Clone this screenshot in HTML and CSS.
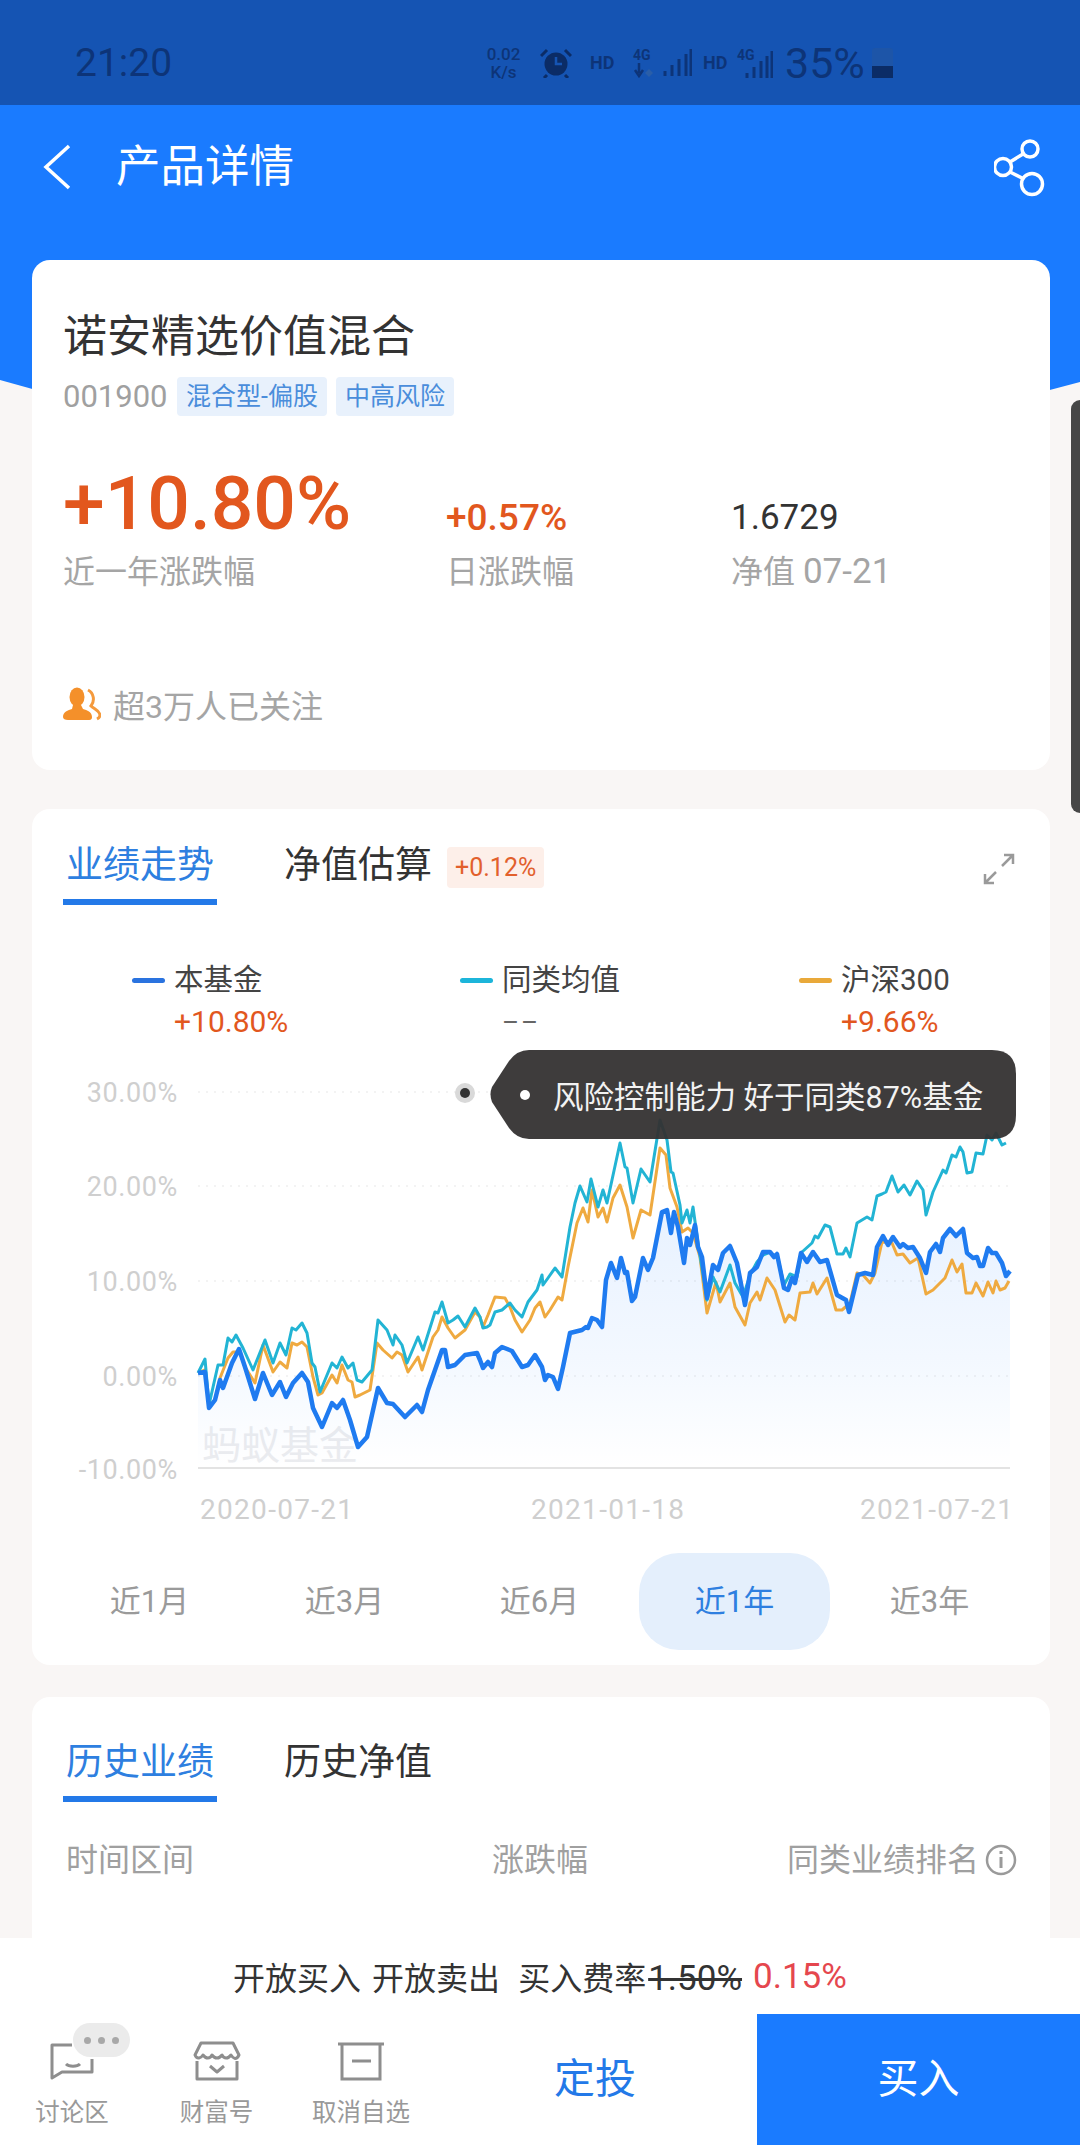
FILE: index.html
```html
<!DOCTYPE html>
<html lang="zh-CN">
  <head>
    <meta charset="UTF-8" />
    <meta name="viewport" content="width=device-width, initial-scale=1.0" />
    <title>产品详情</title>
    <link rel="stylesheet" href="styles.css">
  </head>
  <body>
    <div class="status-bar">
      <span class="status-time">21:20</span>
      <div class="status-speed"><span>0.02</span><span>K/s</span></div>
      <svg class="status-alarm" width="32" height="30" viewBox="0 0 32 30">
        <circle cx="16" cy="16" r="11.5" fill="#0b2c66" />
        <path d="M16 9v7h6" fill="none" stroke="#1554b3" stroke-width="2.5" />
        <path d="M1 8l6-6M31 8l-6-6M7 27l-3 3M25 27l3 3" stroke="#0b2c66" stroke-width="3" />
      </svg>
      <span class="status-hd status-hd-first">HD</span>
      <div class="status-net"><span>4G</span><svg width="22" height="15" viewBox="0 0 22 15"><path d="M6 0v10M2 7l4 6 4-6" fill="none" stroke="#0d3478" stroke-width="2.5" /><path d="M16 6l4 4-4 4-4-4z" fill="#2a5ea8" /></svg></div>
      <svg class="status-signal" width="29" height="27" viewBox="0 0 29 27">
        <path d="M2 22v5M9 16v11M16 10v17M23 5v22M28 0v27" stroke="#0d3478" stroke-width="3" />
      </svg>
      <span class="status-hd status-hd-second">HD</span>
      <div class="status-sim2">
        <span>4G</span>
        <svg width="28" height="27" viewBox="0 0 28 27"><path d="M2 22v5M9 16v11M16 10v17M22 5v22M27 0v27" stroke="#0d3478" stroke-width="3" /></svg>
      </div>
      <span class="status-battery-text">35%</span>
      <div class="status-battery"><div class="status-battery-fill"></div></div>
    </div>

    <header class="app-header">
      <div class="header-row">
        <svg class="back-icon" width="28" height="46" viewBox="0 0 28 46">
          <path d="M26 2L3 23l23 21" fill="none" stroke="#fff" stroke-width="3.5" />
        </svg>
        <h1 class="header-title">产品详情</h1>
        <svg class="share-icon" width="54" height="60" viewBox="0 0 54 60">
          <g fill="none" stroke="#fff" stroke-width="3.5">
            <circle cx="36" cy="12" r="8" />
            <circle cx="9" cy="30" r="8.5" />
            <circle cx="38" cy="47" r="10.5" />
            <path d="M29 17l-13 8M16 35l14 7" />
          </g>
        </svg>
      </div>
    </header>

    <main class="content">
      <section class="card card-summary">
        <h2 class="fund-name">诺安精选价值混合</h2>
        <div class="fund-meta">
          <span class="fund-code">001900</span>
          <span class="fund-tag">混合型-偏股</span>
          <span class="fund-tag">中高风险</span>
        </div>
        <div class="stats">
          <div class="stat">
            <div class="stat-value stat-big up">+10.80%</div>
            <div class="stat-label">近一年涨跌幅</div>
          </div>
          <div class="stat">
            <div class="stat-value stat-mid up">+0.57%</div>
            <div class="stat-label">日涨跌幅</div>
          </div>
          <div class="stat">
            <div class="stat-value">1.6729</div>
            <div class="stat-label">净值 <span class="stat-date">07-21</span></div>
          </div>
        </div>
        <div class="follow">
          <svg width="38" height="34" viewBox="0 0 38 34">
            <path d="M25 3c6 3 7 11 3 16 3 3 8 4 9 9 0 2-1 3-3 4" fill="none" stroke="#f59a3c" stroke-width="3" />
            <ellipse cx="14" cy="10" rx="7.5" ry="9.5" fill="#f4902a" />
            <path d="M10 18h8l2 4c4 1 9 3 9 8 0 3-2 3-4 3H5c-3 0-5-1-5-3 0-5 5-7 9-8z" fill="#f4902a" />
          </svg>
          <span>超3万人已关注</span>
        </div>
      </section>

      <section class="card card-chart">
        <div class="tabs-row">
          <div class="tabs">
            <div class="tab tab-active">业绩走势</div>
            <div class="tab">净值估算</div>
          </div>
          <span class="tab-badge">+0.12%</span>
          <svg class="expand-icon" width="32" height="32" viewBox="0 0 32 32">
            <path d="M19 13L30 2M21 2h9v9M13 19L2 30M2 21v9h9" fill="none" stroke="#9a9a9a" stroke-width="2.5" />
          </svg>
        </div>

        <div class="legend">
          <div class="legend-item legend-fund">
            <div class="legend-name"><i class="legend-bar bar-blue"></i>本基金</div>
            <div class="legend-value up">+10.80%</div>
          </div>
          <div class="legend-item legend-peer">
            <div class="legend-name"><i class="legend-bar bar-teal"></i>同类均值</div>
            <div class="legend-value muted">––</div>
          </div>
          <div class="legend-item legend-index">
            <div class="legend-name"><i class="legend-bar bar-orange"></i>沪深300</div>
            <div class="legend-value up">+9.66%</div>
          </div>
        </div>

        <div class="chart">
          <svg class="chart-svg" width="1018" height="490" viewBox="32 1040 1018 490">
            <defs>
              <linearGradient id="areaFill" x1="0" y1="0" x2="0" y2="1">
                <stop offset="0" stop-color="#1a7bff" stop-opacity="0.1" />
                <stop offset="0.6" stop-color="#1a7bff" stop-opacity="0.05" />
                <stop offset="1" stop-color="#1a7bff" stop-opacity="0" />
              </linearGradient>
            </defs>

            <g class="grid-lines">
              <path d="M198 1092H1010M198 1186H1010M198 1281H1010M198 1376H1010" />
            </g>
            <path class="base-line" d="M198 1468H1010" />

            <g class="axis-text">
              <text x="178" y="1102" text-anchor="end">30.00%</text>
              <text x="178" y="1196" text-anchor="end">20.00%</text>
              <text x="178" y="1291" text-anchor="end">10.00%</text>
              <text x="178" y="1386" text-anchor="end">0.00%</text>
              <text x="178" y="1479" text-anchor="end">-10.00%</text>
            </g>
            <g class="axis-text axis-dates">
              <text x="200" y="1519">2020-07-21</text>
              <text x="531" y="1519">2021-01-18</text>
              <text x="860" y="1519">2021-07-21</text>
            </g>
            <text class="watermark" x="202" y="1459">蚂蚁基金</text>

            <polygon fill="url(#areaFill)" points="198,1468 198,1373 205,1372 209,1408 215,1400 220,1380 223,1388 232,1363 239,1349 245,1367 255,1399 263,1373 272,1395 280,1382 286,1397 293,1383 302,1373 308,1382 313,1408 322,1427 332,1403 337,1408 343,1400 350,1420 358,1447 367,1437 378,1388 387,1403 393,1404 405,1417 417,1405 422,1412 428,1390 435,1370 442,1350 445,1350 448,1367 455,1365 465,1355 477,1353 480,1360 483,1368 488,1362 492,1367 495,1353 502,1347 512,1351 522,1367 528,1365 535,1355 542,1367 545,1380 548,1375 553,1377 558,1389 563,1367 570,1333 582,1330 586,1327 588,1328 592,1318 597,1320 602,1327 606,1280 611,1263 617,1278 621,1258 625,1273 627,1272 632,1301 635,1297 643,1258 648,1270 653,1258 662,1212 667,1210 671,1233 674,1212 678,1227 684,1263 687,1238 690,1245 695,1225 698,1247 702,1257 707,1298 713,1265 718,1270 723,1253 730,1246 737,1263 745,1305 750,1273 757,1267 763,1252 770,1252 774,1257 777,1254 784,1288 788,1290 792,1278 795,1283 801,1253 807,1262 813,1252 820,1262 827,1260 837,1295 846,1300 849,1312 858,1275 865,1273 873,1275 877,1247 883,1236 888,1245 893,1237 900,1247 903,1244 908,1248 913,1247 920,1258 926,1273 930,1252 936,1244 940,1252 943,1238 950,1229 956,1236 963,1229 967,1253 973,1258 977,1257 980,1266 983,1266 988,1248 992,1253 996,1253 1002,1263 1006,1276 1010,1271 1010,1468" />

            <polyline class="line line-orange" points="198,1373 205,1370 209,1407 215,1400 220,1378 228,1358 233,1352 240,1352 245,1367 255,1383 263,1345 273,1372 280,1362 287,1368 292,1343 297,1345 302,1342 307,1347 313,1377 318,1395 322,1393 332,1375 337,1383 342,1365 348,1380 352,1382 355,1397 360,1395 370,1390 377,1343 383,1350 392,1358 397,1352 402,1355 408,1372 418,1357 422,1370 433,1337 438,1330 442,1317 448,1328 455,1338 465,1330 475,1312 480,1317 483,1327 488,1315 495,1297 505,1298 510,1307 515,1320 522,1332 530,1320 535,1308 540,1302 545,1317 550,1310 558,1297 562,1300 568,1267 577,1223 583,1208 588,1222 592,1190 598,1217 603,1208 607,1222 613,1198 620,1185 627,1207 633,1238 641,1210 650,1215 660,1148 666,1155 670,1188 677,1207 682,1232 688,1228 693,1233 700,1257 707,1313 716,1282 720,1302 730,1283 735,1307 745,1325 750,1303 757,1292 760,1300 767,1278 775,1290 785,1322 789,1315 795,1320 800,1293 810,1292 813,1283 817,1294 827,1278 836,1310 842,1310 850,1303 857,1273 863,1275 870,1283 875,1273 882,1242 892,1243 897,1255 903,1254 910,1263 918,1258 926,1294 933,1290 940,1283 945,1278 952,1260 957,1272 962,1264 966,1293 972,1293 976,1283 983,1296 988,1282 993,1293 996,1281 1000,1290 1005,1288 1009,1281" />

            <polyline class="line line-teal" points="198,1373 205,1359 209,1405 218,1365 223,1365 228,1338 232,1342 236,1335 243,1348 253,1370 265,1340 273,1363 280,1343 286,1355 292,1328 296,1330 302,1323 307,1333 312,1363 315,1367 320,1392 332,1363 337,1368 342,1357 348,1368 353,1363 357,1380 362,1382 372,1370 378,1320 387,1330 393,1345 395,1335 402,1345 407,1363 418,1337 423,1350 435,1312 438,1313 442,1302 448,1323 453,1320 458,1316 465,1327 475,1308 480,1317 483,1328 487,1327 490,1325 495,1312 502,1310 510,1303 515,1310 522,1317 528,1302 537,1290 542,1275 543,1285 548,1278 555,1268 562,1277 570,1227 575,1203 580,1186 587,1202 591,1179 598,1207 603,1190 607,1203 620,1143 625,1167 627,1168 633,1203 641,1169 650,1182 660,1120 667,1140 671,1172 673,1173 680,1205 682,1223 687,1210 690,1223 693,1207 698,1243 707,1300 713,1277 720,1292 730,1265 735,1283 743,1297 750,1275 757,1262 763,1255 770,1252 775,1257 777,1254 784,1285 790,1274 797,1277 802,1252 812,1243 815,1236 818,1238 825,1225 830,1227 837,1254 843,1254 846,1248 850,1257 857,1223 867,1217 872,1220 877,1196 882,1194 886,1192 892,1176 898,1192 904,1185 910,1195 917,1181 923,1190 926,1215 933,1192 943,1170 946,1173 952,1155 956,1157 960,1147 963,1152 967,1173 972,1172 976,1153 983,1154 987,1135 992,1140 996,1133 1002,1145 1006,1143" />

            <polyline class="line line-blue" points="198,1373 205,1372 209,1408 215,1400 220,1380 223,1388 232,1363 239,1349 245,1367 255,1399 263,1373 272,1395 280,1382 286,1397 293,1383 302,1373 308,1382 313,1408 322,1427 332,1403 337,1408 343,1400 350,1420 358,1447 367,1437 378,1388 387,1403 393,1404 405,1417 417,1405 422,1412 428,1390 435,1370 442,1350 445,1350 448,1367 455,1365 465,1355 477,1353 480,1360 483,1368 488,1362 492,1367 495,1353 502,1347 512,1351 522,1367 528,1365 535,1355 542,1367 545,1380 548,1375 553,1377 558,1389 563,1367 570,1333 582,1330 586,1327 588,1328 592,1318 597,1320 602,1327 606,1280 611,1263 617,1278 621,1258 625,1273 627,1272 632,1301 635,1297 643,1258 648,1270 653,1258 662,1212 667,1210 671,1233 674,1212 678,1227 684,1263 687,1238 690,1245 695,1225 698,1247 702,1257 707,1298 713,1265 718,1270 723,1253 730,1246 737,1263 745,1305 750,1273 757,1267 763,1252 770,1252 774,1257 777,1254 784,1288 788,1290 792,1278 795,1283 801,1253 807,1262 813,1252 820,1262 827,1260 837,1295 846,1300 849,1312 858,1275 865,1273 873,1275 877,1247 883,1236 888,1245 893,1237 900,1247 903,1244 908,1248 913,1247 920,1258 926,1273 930,1252 936,1244 940,1252 943,1238 950,1229 956,1236 963,1229 967,1253 973,1258 977,1257 980,1266 983,1266 988,1248 992,1253 996,1253 1002,1263 1006,1276 1010,1271" />

            <circle cx="465" cy="1093" r="10" fill="#d9d9d9" />
            <circle cx="465" cy="1093" r="5" fill="#333" />
          </svg>

          <div class="chart-tip">
            <i class="chart-tip-dot"></i>
            <span>风险控制能力 好于同类87%基金</span>
          </div>
        </div>

        <div class="ranges">
          <div class="range">近1月</div>
          <div class="range">近3月</div>
          <div class="range">近6月</div>
          <div class="range range-active">近1年</div>
          <div class="range">近3年</div>
        </div>
      </section>

      <section class="card card-history">
        <div class="tabs">
          <div class="tab tab-active">历史业绩</div>
          <div class="tab">历史净值</div>
        </div>
        <div class="history-head">
          <span class="history-col-time">时间区间</span>
          <span class="history-col-change">涨跌幅</span>
          <span class="history-col-rank">同类业绩排名
            <svg width="32" height="32" viewBox="0 0 32 32">
              <circle cx="16" cy="16" r="14" fill="none" stroke="#9a9a9a" stroke-width="2.5" />
              <path d="M16 13v11M16 7v3" stroke="#9a9a9a" stroke-width="3" />
            </svg>
          </span>
        </div>
      </section>
    </main>

    <div class="scroll-thumb"></div>

    <footer class="footer">
      <div class="notice">
        <span>开放买入</span>
        <span>开放卖出</span>
        <span class="notice-fee">买入费率<s>1.50%</s></span>
        <span class="notice-rate">0.15%</span>
      </div>
      <div class="actions">
        <div class="nav-item">
          <svg width="48" height="40" viewBox="0 0 48 40">
            <path d="M24 4H4v33l10-6h30V18" fill="none" stroke="#8e8e8e" stroke-width="3" stroke-linejoin="round" />
            <path d="M18 23c3 3 11 3 14 0" fill="none" stroke="#8e8e8e" stroke-width="3" />
          </svg>
          <span>讨论区</span>
          <div class="nav-bubble"><i></i><i></i><i></i></div>
        </div>
        <div class="nav-item">
          <svg width="48" height="40" viewBox="0 0 48 40">
            <g fill="none" stroke="#8e8e8e" stroke-width="3" stroke-linejoin="round">
              <path d="M8 2h32l6 12c-3 6-6 3-8 0-3 4-7 4-9 0-3 4-7 4-10 0-2 4-6 4-9 0-2 3-6 5-8 0z" />
              <path d="M4 20v18h40V20M17 25l7 6 7-6" />
            </g>
          </svg>
          <span>财富号</span>
        </div>
        <div class="nav-item">
          <svg width="48" height="40" viewBox="0 0 48 40">
            <path d="M1 3h46M5 3v35h38V3M15 20h19" fill="none" stroke="#8e8e8e" stroke-width="3" />
          </svg>
          <span>取消自选</span>
        </div>
        <div class="btn-plan">定投</div>
        <div class="btn-buy">买入</div>
      </div>
    </footer>
  </body>
</html>
```

FILE: styles.css
```css
* {
  box-sizing: border-box;
}

html,
body {
  margin: 0;
  padding: 0;
}

body {
  position: relative;
  width: 1080px;
  height: 2145px;
  overflow: hidden;
  background: #f9f6f5;
  color: #333;
  font-family: Roboto, "Noto Sans CJK SC", sans-serif;
}

h1,
h2 {
  margin: 0;
  font-weight: 400;
}

.up {
  color: #e2571e;
}

/* status bar */
.status-bar {
  display: flex;
  align-items: center;
  height: 105px;
  padding: 20px 0 0 75px;
  background: #1554b3;
  color: #0d3478;
}

.status-time {
  width: 98px;
  font-size: 39px;
  line-height: 44px;
  white-space: nowrap;
}

.status-speed {
  display: flex;
  flex-direction: column;
  align-items: center;
  width: 39px;
  margin-left: 311px;
  font-size: 17px;
  font-weight: 500;
  line-height: 18px;
}

.status-alarm {
  margin-left: 17px;
}

.status-hd {
  width: 26px;
  font-size: 18px;
  font-weight: 700;
  line-height: 20px;
}

.status-hd-first {
  margin-left: 18px;
}

.status-hd-second {
  margin-left: 11px;
}

.status-net {
  display: flex;
  flex-direction: column;
  width: 22px;
  margin-left: 17px;
  font-size: 14px;
  font-weight: 700;
  line-height: 15px;
}

.status-signal {
  margin-left: 8px;
}

.status-sim2 {
  position: relative;
  width: 36px;
  height: 30px;
  margin-left: 8px;
  font-size: 14px;
  font-weight: 700;
  line-height: 14px;
}

.status-sim2 span {
  position: absolute;
  left: 0;
  top: 0;
}

.status-sim2 svg {
  position: absolute;
  right: 0;
  bottom: 0;
}

.status-battery-text {
  width: 80px;
  margin-left: 12px;
  font-size: 43px;
  line-height: 44px;
  white-space: nowrap;
}

.status-battery {
  display: flex;
  align-items: flex-end;
  width: 21px;
  height: 30px;
  margin-left: 7px;
  border-radius: 3px 3px 2px 2px;
  background: #1d55a8;
}

.status-battery-fill {
  width: 100%;
  height: 12px;
  background: #0b2c66;
}

/* header */
.app-header {
  height: 308px;
  background: #1a7bff;
  clip-path: polygon(0 0, 100% 0, 100% 277px, 97.2% 285px, 50% 308px, 3% 284px, 0 275px);
}

.header-row {
  display: flex;
  align-items: center;
  height: 124px;
  padding: 0 32px 0 43px;
  color: #fff;
}

.header-title {
  margin-left: 45px;
  font-size: 44.5px;
  line-height: 60px;
}

.share-icon {
  margin-left: auto;
}

/* cards */
.content {
  position: relative;
  margin-top: -153px;
  padding: 0 30px 0 32px;
}

.card {
  background: #fff;
  border-radius: 18px;
}

.card-summary {
  padding: 47px 31px 46px;
}

.fund-name {
  font-size: 44px;
  line-height: 60px;
}

.fund-meta {
  display: flex;
  align-items: center;
  height: 39px;
  margin-top: 10px;
}

.fund-code {
  width: 114px;
  color: #a0a0a0;
  font-size: 31px;
}

.fund-tag {
  height: 39px;
  margin-right: 9px;
  padding: 0 9px;
  border-radius: 4px;
  background: #e8f1fc;
  color: #4a8ddb;
  font-size: 25px;
  line-height: 39px;
  white-space: nowrap;
}

.stats {
  display: grid;
  grid-template-columns: 383px 285px auto;
  align-items: end;
  margin-top: 47px;
}

.stat-value {
  font-size: 35px;
  line-height: 50px;
}

.stat-mid {
  font-size: 37px;
  font-weight: 500;
}

.stat-big {
  font-size: 75px;
  font-weight: 500;
  line-height: 80px;
}

.stat-label {
  margin-top: 9px;
  color: #a5a5a5;
  font-size: 32px;
  line-height: 40px;
}

.stat-date {
  font-size: 35px;
}

.follow {
  display: flex;
  align-items: center;
  gap: 12px;
  height: 40px;
  margin-top: 92px;
  color: #a5a5a5;
  font-size: 32px;
}

.card-chart {
  height: 856px;
  margin-top: 39px;
  padding-top: 32px;
}

.tabs-row {
  display: flex;
  align-items: flex-start;
  padding: 0 35px 0 31px;
}

.tabs {
  display: flex;
  gap: 64px;
}

.tab {
  height: 64px;
  padding: 0 3px 8px;
  font-size: 37px;
  line-height: 50px;
}

.tab-active {
  border-bottom: 6px solid #2379e8;
  color: #2e7fe0;
}

.tab-badge {
  height: 41px;
  margin: 6px 0 0 12px;
  padding: 0 8px;
  border-radius: 4px;
  background: #fdefe9;
  color: #e2602c;
  font-size: 25px;
  line-height: 41px;
}

.expand-icon {
  margin: 12px 0 0 auto;
}

.legend {
  position: relative;
  height: 95px;
  margin-top: 53px;
}

.legend-item {
  position: absolute;
  top: 0;
}

.legend-fund {
  left: 100px;
}

.legend-peer {
  left: 428px;
}

.legend-index {
  left: 767px;
}

.legend-name {
  display: flex;
  align-items: center;
  color: #444;
  font-size: 29.5px;
  line-height: 44px;
}

.legend-bar {
  width: 33px;
  height: 5px;
  margin-right: 9px;
  border-radius: 3px;
}

.bar-blue {
  background: #2a73df;
}

.bar-teal {
  background: #1cb5da;
}

.bar-orange {
  background: #e9a93a;
}

.legend-value {
  padding-left: 42px;
  font-size: 30px;
  line-height: 40px;
}

.muted {
  color: #666;
  font-size: 26px;
  letter-spacing: 2px;
}

.chart {
  position: relative;
  height: 490px;
  margin-top: -13px;
}

.chart-svg {
  display: block;
}

.grid-lines path {
  fill: none;
  stroke: #efefef;
  stroke-width: 1.5;
  stroke-dasharray: 2 6;
}

.base-line {
  fill: none;
  stroke: #e3e3e3;
  stroke-width: 2;
}

.axis-text text {
  fill: #cfcfcf;
  font-size: 27px;
  letter-spacing: 0.6px;
}

.axis-dates text {
  font-size: 28px;
  letter-spacing: 1.3px;
}

.watermark {
  fill: #ebecef;
  font-size: 39px;
}

.line {
  fill: none;
  stroke-linejoin: round;
}

.line-blue {
  stroke: #1f7bf0;
  stroke-width: 4.5;
}

.line-teal {
  stroke: #22b4d4;
  stroke-width: 3;
}

.line-orange {
  stroke: #efaa40;
  stroke-width: 3;
}

/* the pointed pill sits over the chart lines, which show faintly through it */
.chart-tip {
  position: absolute;
  left: 457px;
  top: 10px;
  display: flex;
  align-items: center;
  width: 527px;
  height: 89px;
  padding-left: 31px;
  background: rgba(52, 49, 49, 0.95);
  color: #f2f2f2;
  font-size: 30.5px;
  white-space: nowrap;
  clip-path: path("M40 0H503Q527 0 527 24V65Q527 89 503 89H40Q28 89 20 78L3 52Q0 44 3 37L20 11Q28 0 40 0Z");
}

.chart-tip-dot {
  width: 10px;
  height: 10px;
  margin-right: 23px;
  border-radius: 50%;
  background: #fff;
}

.ranges {
  display: grid;
  grid-template-columns: repeat(5, 195px);
  align-items: center;
  margin: 23px 0 0 20px;
}

.range {
  height: 97px;
  color: #9a9a9a;
  font-size: 31px;
  line-height: 97px;
  text-align: center;
}

.range-active {
  margin: 0 2px;
  border-radius: 40px;
  background: #e4effc;
  color: #2e7fe0;
}

.card-history {
  height: 400px;
  margin-top: 32px;
  padding: 41px 33px 0 31px;
}

.history-head {
  display: grid;
  grid-template-columns: 426px 295px auto;
  align-items: center;
  margin-top: 38px;
  padding-left: 3px;
  color: #a0a0a0;
  font-size: 32px;
  line-height: 40px;
}

.history-col-rank {
  display: flex;
  align-items: center;
  gap: 6px;
  white-space: nowrap;
}

/* overlays */
.scroll-thumb {
  position: absolute;
  right: 0;
  top: 400px;
  width: 9px;
  height: 413px;
  border-radius: 9px 0 0 9px;
  background: #474747;
}

.footer {
  position: absolute;
  left: 0;
  bottom: 0;
  width: 1080px;
  height: 207px;
  background: #fff;
}

.notice {
  display: flex;
  justify-content: center;
  align-items: center;
  gap: 11px;
  height: 76px;
  font-size: 32px;
}

.notice-fee {
  margin-left: 7px;
}

.notice-fee s {
  margin-left: 2px;
  font-size: 35px;
}

.notice-rate {
  color: #e5474e;
  font-size: 35px;
}

.actions {
  display: grid;
  grid-template-columns: 144px 145px 144px 324px 323px;
  height: 131px;
}

.nav-item {
  position: relative;
  display: flex;
  flex-direction: column;
  align-items: center;
  padding-top: 27px;
  color: #999;
  font-size: 24.5px;
  line-height: 36px;
}

.nav-item span {
  margin-top: 14px;
}

.nav-bubble {
  position: absolute;
  left: 73px;
  top: 9px;
  display: flex;
  justify-content: center;
  align-items: center;
  gap: 7px;
  width: 57px;
  height: 34px;
  border-radius: 17px;
  background: #ebebeb;
}

.nav-bubble i {
  width: 7px;
  height: 7px;
  border-radius: 50%;
  background: #a8a8a8;
}

.btn-plan,
.btn-buy {
  font-size: 41px;
  line-height: 131px;
  text-align: center;
}

.btn-plan {
  color: #2379e8;
}

.btn-buy {
  background: #1a7bff;
  color: #fff;
}
```
